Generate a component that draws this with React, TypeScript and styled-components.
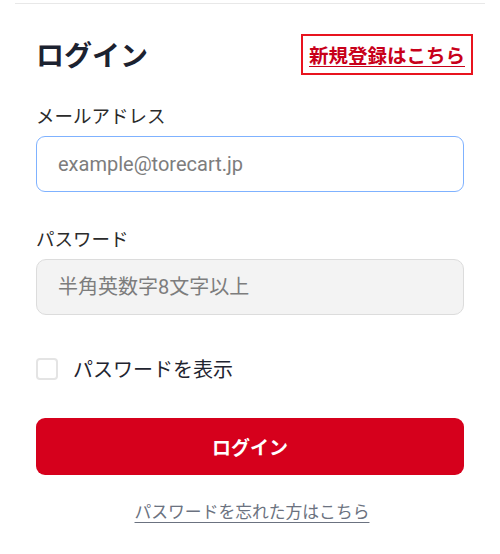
import React, { useState } from "react";
import styled, { createGlobalStyle } from "styled-components";

const GlobalStyle = createGlobalStyle`
  html, body { margin:0; padding:0; background:#fff; }
  body { font-family: "Noto Sans CJK JP", "Noto Sans", Roboto, sans-serif; }
  * { box-sizing:border-box; }
`

const Page = styled.div`
  width:500px;
  padding-top:3px;
  background:#fff;
`
const Divider = styled.div`
  height:1px;
  margin:0 15px;
  background:#e8e8e8;
`
const Form = styled.form`
  display:flex;
  flex-direction:column;
  padding:30px 36px 0 36px;
`
const Header = styled.div`
  display:flex;
  justify-content:space-between;
  align-items:center;
  height:41px;
`
const Title = styled.h1`
  margin:0;
  font-size:28px;
  font-weight:700;
  color:#1c2230;
  line-height:41px;
`
const SignupLink = styled.a`
  display:flex;
  align-items:center;
  height:41px;
  margin-right:-9px;
  padding:0 6px;
  border:2px solid #e8141f;
  color:#c8001a;
  font-size:19.5px;
  font-weight:700;
  text-decoration:underline;
  text-underline-offset:3px;
  text-decoration-thickness:1px;
  cursor:pointer;
`
const Label = styled.label<{ top: number }>`
  display:block;
  margin-top:${({ top }) => top}px;
  margin-bottom:8px;
  font-size:18.5px;
  line-height:26px;
  color:#2b2b2b;
`
const Input = styled.input<{ filled?: boolean }>`
  width:100%;
  height:56px;
  padding:0 21px;
  border:1px solid ${({ filled }) => (filled ? '#dcdcdc' : '#7fb2ff')};
  border-radius:${({ filled }) => (filled ? 10 : 9)}px;
  background:${({ filled }) => (filled ? '#f3f3f3' : '#fff')};
  font-family:Roboto, "Noto Sans CJK JP", sans-serif;
  font-size:20px;
  color:#333;
  outline:none;
  &::placeholder{ color:#7d7d7d; }
`
const CheckRow = styled.label`
  display:flex;
  align-items:center;
  gap:15px;
  margin-top:42px;
  height:23px;
  font-size:20px;
  color:#1f2430;
  cursor:pointer;
`
const CheckBox = styled.span<{ checked: boolean }>`
  width:22px;
  height:22px;
  border:2px solid #e4e4e4;
  border-radius:4px;
  background:${({ checked }) => (checked ? '#d6001c' : '#fff')};
`
const SubmitButton = styled.button`
  margin-top:38px;
  height:57px;
  border:none;
  border-radius:9px;
  background:#d6001c;
  color:#fff;
  font-family:"Noto Sans CJK JP", sans-serif;
  font-size:19px;
  font-weight:700;
  cursor:pointer;
`
const ForgotLink = styled.a`
  align-self:center;
  margin-top:24px;
  margin-left:4px;
  font-size:16.8px;
  line-height:24px;
  color:#6b7280;
  text-decoration:underline;
  text-underline-offset:4px;
  cursor:pointer;
`

const App = () => {
  const [show, setShow] = useState(false)
  return <Page>
    <GlobalStyle />
    <Divider />
    <Form onSubmit={(e) => e.preventDefault()}>
      <Header>
        <Title>ログイン</Title>
        <SignupLink>新規登録はこちら</SignupLink>
      </Header>
      <Label top={27}>メールアドレス</Label>
      <Input type="email" placeholder="example@torecart.jp" />
      <Label top={33}>パスワード</Label>
      <Input filled type={show ? 'text' : 'password'} placeholder="半角英数字8文字以上" />
      <CheckRow onClick={() => setShow(!show)}>
        <CheckBox checked={show} />
        パスワードを表示
      </CheckRow>
      <SubmitButton type="submit">ログイン</SubmitButton>
      <ForgotLink>パスワードを忘れた方はこちら</ForgotLink>
    </Form>
  </Page>
}

export default App;
